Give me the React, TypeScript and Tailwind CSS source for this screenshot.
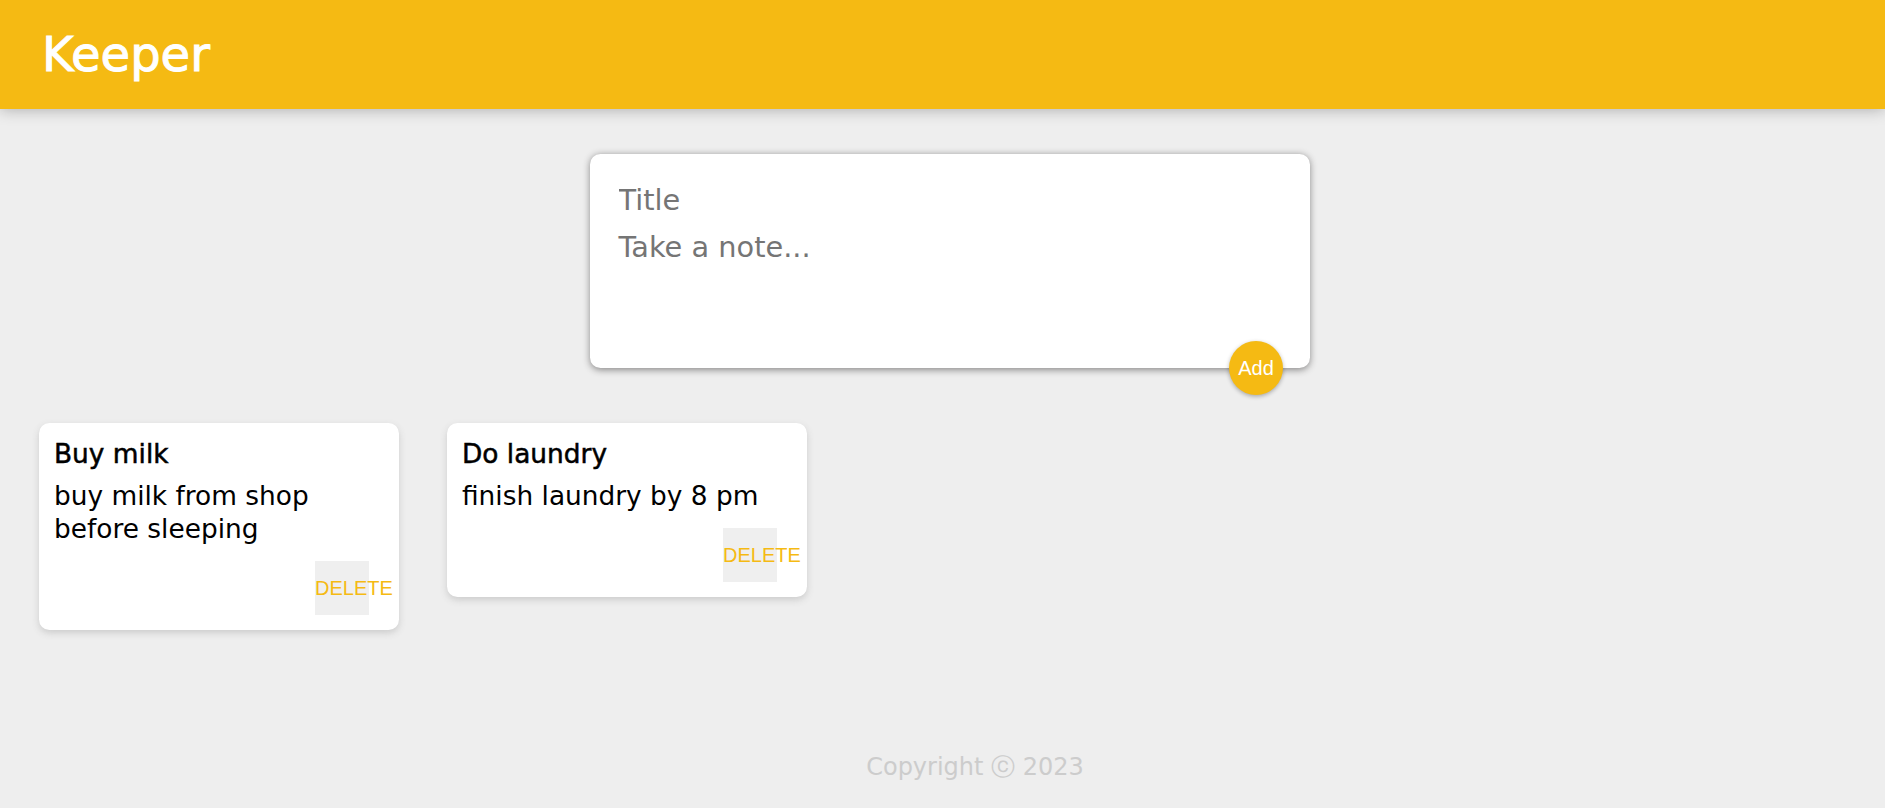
import { useState } from 'react';

interface Note {
  id: number;
  title: string;
  content: string;
}

const INITIAL_NOTES: Note[] = [
  { id: 1, title: 'Buy milk', content: 'buy milk from shop before sleeping' },
  { id: 2, title: 'Do laundry', content: 'finish laundry by 8 pm' },
];

export default function App() {
  const [notes, setNotes] = useState<Note[]>(INITIAL_NOTES);
  const [draft, setDraft] = useState({ title: '', content: '' });

  function addNote() {
    if (!draft.title && !draft.content) return;
    setNotes([...notes, { id: Date.now(), ...draft }]);
    setDraft({ title: '', content: '' });
  }

  return (
    <div className="min-h-screen flex flex-col bg-[#eeeeee] font-['DejaVu_Sans',sans-serif]">
      {/* Header */}
      <header className="bg-[#f5ba13] h-[109px] px-[42px] py-[24px] shadow-[0_0_15px_0_rgba(0,0,0,0.3)] relative z-10">
        <h1 className="text-white text-[48px] leading-[61px] font-normal [-webkit-text-stroke:1px_white]">
          Keeper
        </h1>
      </header>

      <main className="flex-1 pl-[15px]">
        {/* Create area */}
        <form
          onSubmit={(e) => {
            e.preventDefault();
            addNote();
          }}
          className="relative w-[720px] mx-auto mt-[45px] mb-[31px] bg-white p-[22.5px] rounded-[10.5px] shadow-[0_1.5px_7.5px_rgb(138,137,137)]"
        >
          <input
            value={draft.title}
            onChange={(e) => setDraft({ ...draft, title: e.target.value })}
            placeholder="Title"
            className="block w-full h-[47px] p-[6px] text-[28.8px] leading-[35px] outline-none border-none placeholder:text-[#757575]"
          />
          <textarea
            value={draft.content}
            onChange={(e) => setDraft({ ...draft, content: e.target.value })}
            placeholder="Take a note..."
            rows={3}
            className="block w-full h-[122px] p-[6px] text-[28.8px] leading-[35px] outline-none border-none resize-none placeholder:text-[#757575]"
          />
          <button
            type="submit"
            className="absolute right-[27px] bottom-[-27px] w-[54px] h-[54px] rounded-full bg-[#f5ba13] text-white text-[20px] font-['Liberation_Sans',Arial,sans-serif] shadow-[0_1.5px_4.5px_rgba(0,0,0,0.3)] cursor-pointer"
          >
            Add
          </button>
        </form>

        {/* Notes */}
        <div className="flex flex-wrap items-start">
          {notes.map((note) => (
            <div
              key={note.id}
              className="w-[360px] m-[24px] bg-white p-[15px] rounded-[10.5px] shadow-[0_3px_7.5px_#cccccc]"
            >
              <h1 className="text-[26.4px] leading-[32px] mb-[9px] text-black [-webkit-text-stroke:0.5px_black]">
                {note.title}
              </h1>
              <p className="text-[26.4px] leading-[33px] mb-[16px] text-black whitespace-pre-wrap break-words">
                {note.content}
              </p>
              <div className="flex justify-end pr-[15px]">
                <button
                  onClick={() => setNotes(notes.filter((n) => n.id !== note.id))}
                  className="w-[54px] h-[54px] p-0 bg-[#efefef] text-[#f5ba13] text-[20px] leading-[54px] text-left whitespace-nowrap overflow-visible font-['Liberation_Sans',Arial,sans-serif] cursor-pointer"
                >
                  DELETE
                </button>
              </div>
            </div>
          ))}
        </div>
      </main>

      {/* Footer */}
      <footer className="h-[60px] pl-[65px] text-center">
        <p className="text-[#cccccc] text-[24px] leading-[38px]">Copyright ⓒ 2023</p>
      </footer>
    </div>
  );
}
